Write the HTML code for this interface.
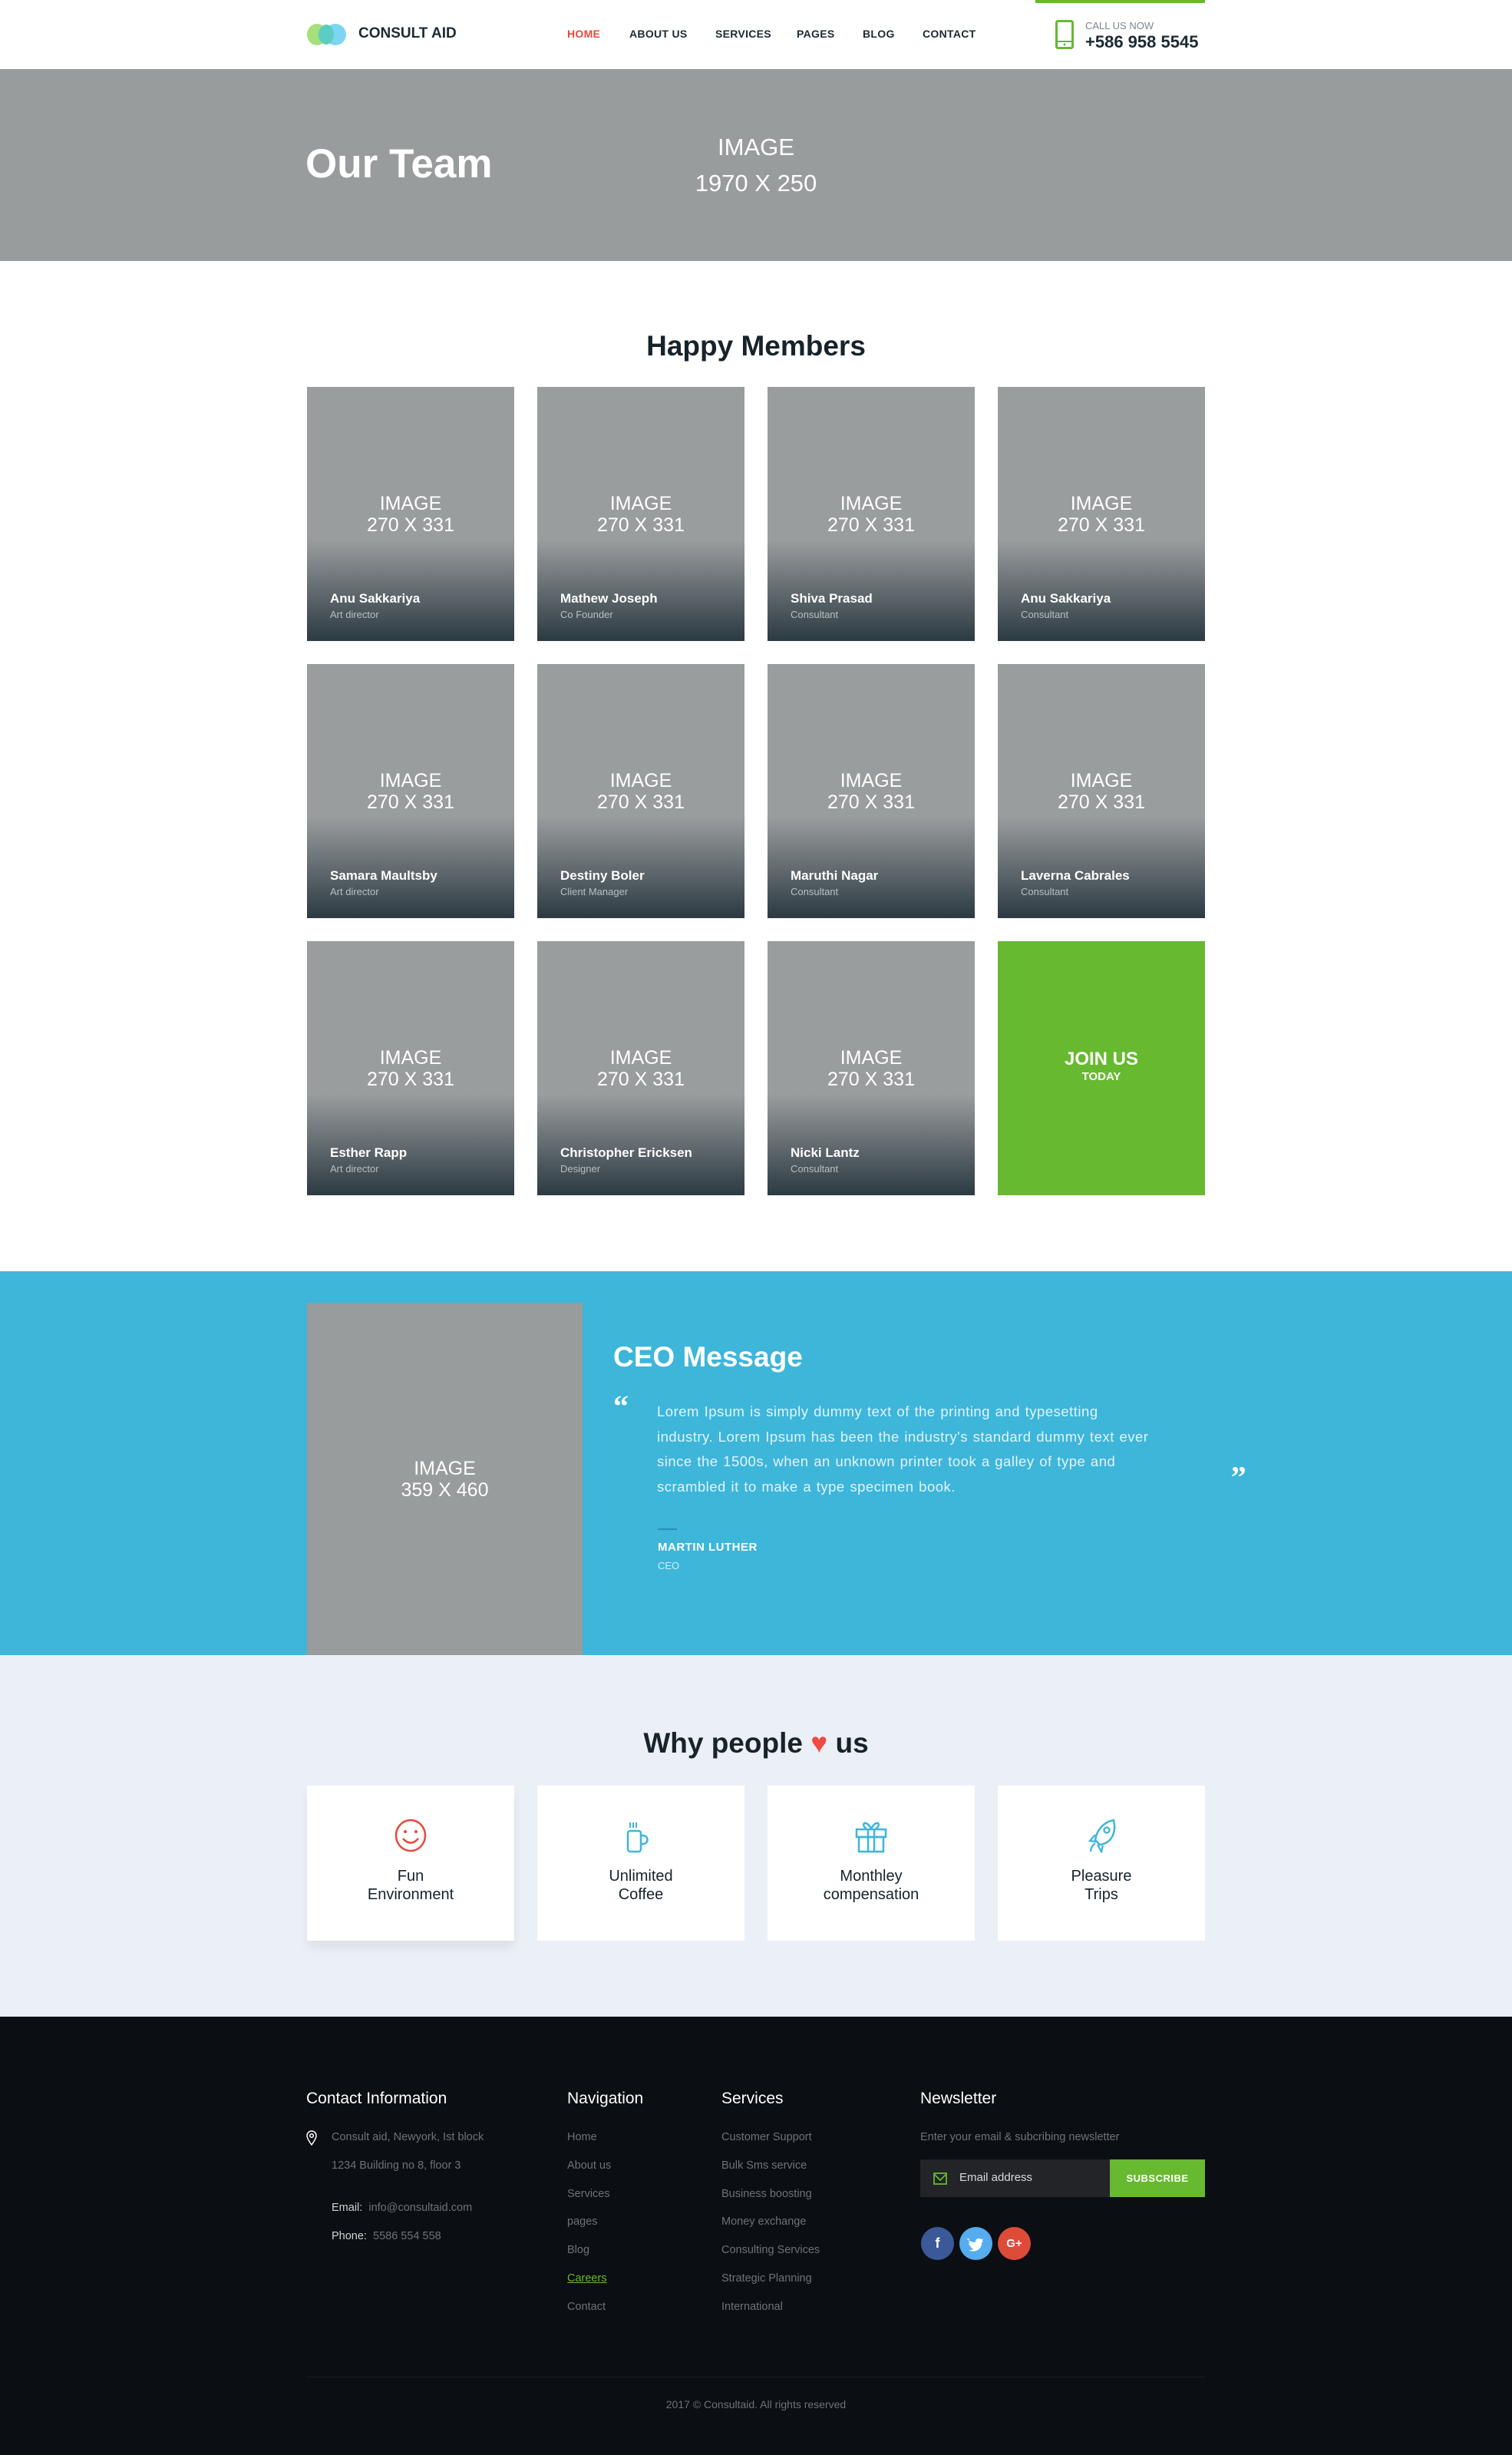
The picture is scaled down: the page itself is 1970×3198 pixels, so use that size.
<!DOCTYPE html>
<html><head><meta charset="utf-8"><style>
*{margin:0;padding:0;box-sizing:border-box}
body{width:1970px;height:3198px;position:relative;font-family:"Liberation Sans",sans-serif;background:#fff;overflow:hidden}
.a{position:absolute}
.nav{position:absolute;top:36px;font-size:14px;font-weight:bold;color:#1b2a33;letter-spacing:0.3px}
.card{position:absolute;width:270px;height:331px;background:linear-gradient(to bottom,#9a9d9e 0%,#9a9d9e 60%,#2c3a42 100%);color:#fff}
.card .im{position:absolute;top:138px;width:100%;text-align:center;font-size:25px;line-height:28px}
.card .n{position:absolute;left:30px;top:266px;font-size:17px;font-weight:bold}
.card .r{position:absolute;left:30px;top:289px;font-size:13px;color:#b9bfc2}
.box{position:absolute;top:2326px;width:270px;height:202px;background:#fff;text-align:center}
.box svg{position:absolute;left:113px;top:42px}
.box div{position:absolute;top:106px;width:100%;font-size:20px;line-height:24px;color:#17232b}
.fh{position:absolute;top:2722px;font-size:21px;color:#fff}
.fl{position:absolute;font-size:14.5px;color:#6e7378;line-height:36.8px}
</style></head><body>
<!-- header -->
<svg class="a" style="left:399px;top:31px" width="54" height="28"><ellipse cx="14" cy="14" rx="13" ry="14" fill="#a6e07a"/><ellipse cx="38" cy="14" rx="14" ry="14" fill="#7dd5f2"/><ellipse cx="26" cy="14" rx="10" ry="13" fill="#5ccdc2"/></svg>
<div class="a" style="left:467px;top:33px;font-size:19px;font-weight:bold;color:#1b2a33">CONSULT AID</div>
<div class="nav" style="left:739px;color:#e8493a">HOME</div>
<div class="nav" style="left:820px">ABOUT US</div>
<div class="nav" style="left:932px">SERVICES</div>
<div class="nav" style="left:1038px">PAGES</div>
<div class="nav" style="left:1124px">BLOG</div>
<div class="nav" style="left:1202px">CONTACT</div>
<div class="a" style="left:1349px;top:0;width:221px;height:4px;background:#67b930"></div>
<svg class="a" style="left:1375px;top:26px" width="24" height="38"><rect x="1.5" y="1.5" width="21" height="35" rx="2" fill="none" stroke="#67b930" stroke-width="3"/><line x1="2" y1="28" x2="22" y2="28" stroke="#67b930" stroke-width="2"/><circle cx="12" cy="32" r="1.5" fill="#67b930"/></svg>
<div class="a" style="left:1414px;top:26px;font-size:13px;color:#7b8790">CALL US NOW</div>
<div class="a" style="left:1414px;top:42px;font-size:22px;font-weight:bold;color:#1b2a33">+586 958 5545</div>
<!-- banner -->
<div class="a" style="left:0;top:90px;width:1970px;height:250px;background:#999c9d"></div>
<div class="a" style="left:398px;top:183px;font-size:53px;font-weight:bold;color:#fff">Our Team</div>
<div class="a" style="left:835px;top:168px;width:300px;text-align:center;font-size:31px;line-height:47px;color:#fff">IMAGE<br>1970 X 250</div>
<!-- members -->
<div class="a" style="left:0;top:430px;width:1970px;text-align:center;font-size:37px;font-weight:bold;color:#17232b">Happy Members</div>
<div class="card" style="left:400px;top:504px"><div class="im">IMAGE<br>270 X 331</div><div class="n">Anu Sakkariya</div><div class="r">Art director</div></div>
<div class="card" style="left:700px;top:504px"><div class="im">IMAGE<br>270 X 331</div><div class="n">Mathew Joseph</div><div class="r">Co Founder</div></div>
<div class="card" style="left:1000px;top:504px"><div class="im">IMAGE<br>270 X 331</div><div class="n">Shiva Prasad</div><div class="r">Consultant</div></div>
<div class="card" style="left:1300px;top:504px"><div class="im">IMAGE<br>270 X 331</div><div class="n">Anu Sakkariya</div><div class="r">Consultant</div></div>
<div class="card" style="left:400px;top:865px"><div class="im">IMAGE<br>270 X 331</div><div class="n">Samara Maultsby</div><div class="r">Art director</div></div>
<div class="card" style="left:700px;top:865px"><div class="im">IMAGE<br>270 X 331</div><div class="n">Destiny Boler</div><div class="r">Client Manager</div></div>
<div class="card" style="left:1000px;top:865px"><div class="im">IMAGE<br>270 X 331</div><div class="n">Maruthi Nagar</div><div class="r">Consultant</div></div>
<div class="card" style="left:1300px;top:865px"><div class="im">IMAGE<br>270 X 331</div><div class="n">Laverna Cabrales</div><div class="r">Consultant</div></div>
<div class="card" style="left:400px;top:1226px"><div class="im">IMAGE<br>270 X 331</div><div class="n">Esther Rapp</div><div class="r">Art director</div></div>
<div class="card" style="left:700px;top:1226px"><div class="im">IMAGE<br>270 X 331</div><div class="n">Christopher Ericksen</div><div class="r">Designer</div></div>
<div class="card" style="left:1000px;top:1226px"><div class="im">IMAGE<br>270 X 331</div><div class="n">Nicki Lantz</div><div class="r">Consultant</div></div>
<div class="a" style="left:1300px;top:1226px;width:270px;height:331px;background:#67b930;color:#fff;text-align:center">
<div style="margin-top:140px;font-size:24px;font-weight:bold">JOIN US</div><div style="font-size:15px;font-weight:bold">TODAY</div></div>
<!-- CEO -->
<div class="a" style="left:0;top:1656px;width:1970px;height:500px;background:#3db6da"></div>
<div class="a" style="left:400px;top:1697px;width:359px;height:460px;background:#999c9d;color:#fff;text-align:center;font-size:25px;line-height:28px;padding-top:202px">IMAGE<br>359 X 460</div>
<div class="a" style="left:799px;top:1747px;font-size:37px;font-weight:bold;color:#fff">CEO Message</div>
<div class="a" style="left:799px;top:1808px;font-size:40px;font-weight:bold;color:#fff;font-family:'Liberation Serif',serif">&#8220;</div>
<div class="a" style="left:1604px;top:1880px;font-size:40px;font-weight:bold;color:#fff;font-family:'Liberation Serif',serif">&#8222;</div>
<div class="a" style="left:856px;top:1823px;white-space:nowrap;font-size:18.5px;letter-spacing:0.5px;word-spacing:1px;line-height:32.7px;color:#e3f3f9">Lorem Ipsum is simply dummy text of the printing and typesetting<br>industry. Lorem Ipsum has been the industry's standard dummy text ever<br>since the 1500s, when an unknown printer took a galley of type and<br>scrambled it to make a type specimen book.</div>
<div class="a" style="left:857px;top:1991px;width:25px;height:2px;background:#2a8fb0"></div>
<div class="a" style="left:857px;top:2007px;font-size:15px;font-weight:bold;color:#fff;letter-spacing:0.5px">MARTIN LUTHER</div>
<div class="a" style="left:857px;top:2032px;font-size:13px;color:#d4eef7">CEO</div>
<!-- why -->
<div class="a" style="left:0;top:2156px;width:1970px;height:471px;background:#ebeff6"></div>
<div class="a" style="left:0;top:2250px;width:1970px;text-align:center;font-size:37px;font-weight:bold;color:#17232b">Why people <span style="color:#f04a42">&#9829;</span> us</div>
<div class="box" style="left:400px;box-shadow:0 10px 12px rgba(0,0,0,0.06)"><svg width="44" height="46"><ellipse cx="22" cy="23" rx="19" ry="20" fill="none" stroke="#e8493a" stroke-width="2.5"/><circle cx="15" cy="18" r="2" fill="#e8493a"/><circle cx="29" cy="18" r="2" fill="#e8493a"/><path d="M12 27 Q22 38 32 27" fill="none" stroke="#e8493a" stroke-width="2.5"/></svg><div>Fun<br>Environment</div></div>
<div class="box" style="left:700px"><svg width="44" height="46"><path d="M8 6v7M12 6v7M16 6v7" stroke="#3db6da" stroke-width="2"/><rect x="5" y="17" width="17" height="27" rx="3" fill="none" stroke="#3db6da" stroke-width="2.5"/><path d="M22 23h3a5 5 0 0 1 0 11h-3" fill="none" stroke="#3db6da" stroke-width="2.5"/></svg><div>Unlimited<br>Coffee</div></div>
<div class="box" style="left:1000px"><svg width="44" height="46"><rect x="3" y="15" width="38" height="10" fill="none" stroke="#3db6da" stroke-width="2.5"/><rect x="6" y="25" width="32" height="19" fill="none" stroke="#3db6da" stroke-width="2.5"/><path d="M18 15v29M26 15v29M22 14c-8-14-14-4-6 0M22 14c8-14 14-4 6 0" fill="none" stroke="#3db6da" stroke-width="2.5"/></svg><div>Monthley<br>compensation</div></div>
<div class="box" style="left:1300px"><svg width="44" height="46"><path d="M38 3c-12 2-22 12-24 26l6 6c14-2 22-14 18-32z" fill="none" stroke="#3db6da" stroke-width="2.5"/><circle cx="29" cy="16" r="3.5" fill="none" stroke="#3db6da" stroke-width="2.3"/><path d="M14 22l-7 8 8 1M24 36l-2 8 -5-9M14 33c-4 3-6 7-6 11" fill="none" stroke="#3db6da" stroke-width="2.3"/></svg><div>Pleasure<br>Trips</div></div>
<!-- footer -->
<div class="a" style="left:0;top:2627px;width:1970px;height:571px;background:#0b0e12"></div>
<div class="fh" style="left:399px">Contact Information</div>
<div class="fh" style="left:739px">Navigation</div>
<div class="fh" style="left:940px">Services</div>
<div class="fh" style="left:1199px">Newsletter</div>
<svg class="a" style="left:399px;top:2775px" width="14" height="20"><path d="M7 19C2 12 1 9 1 7a6 6 0 0 1 12 0c0 2-1 5-6 12z" fill="none" stroke="#fff" stroke-width="1.5"/><circle cx="7" cy="7" r="2.3" fill="none" stroke="#fff" stroke-width="1.5"/></svg>
<div class="fl" style="left:432px;top:2766px">Consult aid, Newyork, Ist block<br>1234 Building no 8, floor 3</div>
<div class="fl" style="left:432px;top:2858px"><span style="color:#cfd3d6">Email:</span>&nbsp; info@consultaid.com<br><span style="color:#cfd3d6">Phone:</span>&nbsp; 5586 554 558</div>
<div class="fl" style="left:739px;top:2766px">Home<br>About us<br>Services<br>pages<br>Blog<br><span style="color:#67b930;text-decoration:underline">Careers</span><br>Contact</div>
<div class="fl" style="left:940px;top:2766px">Customer Support<br>Bulk Sms service<br>Business boosting<br>Money exchange<br>Consulting Services<br>Strategic Planning<br>International</div>
<div class="fl" style="left:1199px;top:2766px">Enter your email &amp; subcribing newsletter</div>
<div class="a" style="left:1199px;top:2813px;width:371px;height:49px;background:#222428;border-radius:2px"></div>
<svg class="a" style="left:1216px;top:2830px" width="18" height="16"><rect x="1" y="1" width="16" height="14" fill="none" stroke="#67b930" stroke-width="1.8"/><path d="M1 2l8 8 8-8" fill="none" stroke="#67b930" stroke-width="1.8"/></svg>
<div class="a" style="left:1250px;top:2828px;font-size:15px;color:#d8dadc">Email address</div>
<div class="a" style="left:1446px;top:2813px;width:124px;height:49px;background:#67b930;color:#fff;font-size:13px;font-weight:bold;text-align:center;line-height:49px;letter-spacing:0.5px">SUBSCRIBE</div>
<div class="a" style="left:1200px;top:2901px;width:43px;height:43px;border-radius:50%;background:#3b5998;color:#fff;text-align:center;line-height:43px;font-weight:bold;font-size:18px">f</div>
<div class="a" style="left:1250px;top:2901px;width:43px;height:43px;border-radius:50%;background:#55acee"><svg width="43" height="43"><path d="M13 17c4 4 8 5 12 5 0-5 5-7 8-4l3-1-2 3 2 0-2 2c0 9-8 15-18 11 3 0 5-1 7-2-3 0-4-2-5-3h2c-3-1-4-3-4-5l2 1c-2-2-3-4-1-7z" fill="#fff" transform="translate(-3,-1) scale(0.95)"/></svg></div>
<div class="a" style="left:1300px;top:2901px;width:43px;height:43px;border-radius:50%;background:#dd4b39;color:#fff;text-align:center;line-height:43px;font-weight:bold;font-size:15px">G+</div>
<div class="a" style="left:400px;top:3096px;width:1170px;height:1px;background:#1e2227"></div>
<div class="a" style="left:0;top:3124px;width:1970px;text-align:center;font-size:14px;color:#6e7378">2017 &copy; Consultaid. All rights reserved</div>
</body></html>
